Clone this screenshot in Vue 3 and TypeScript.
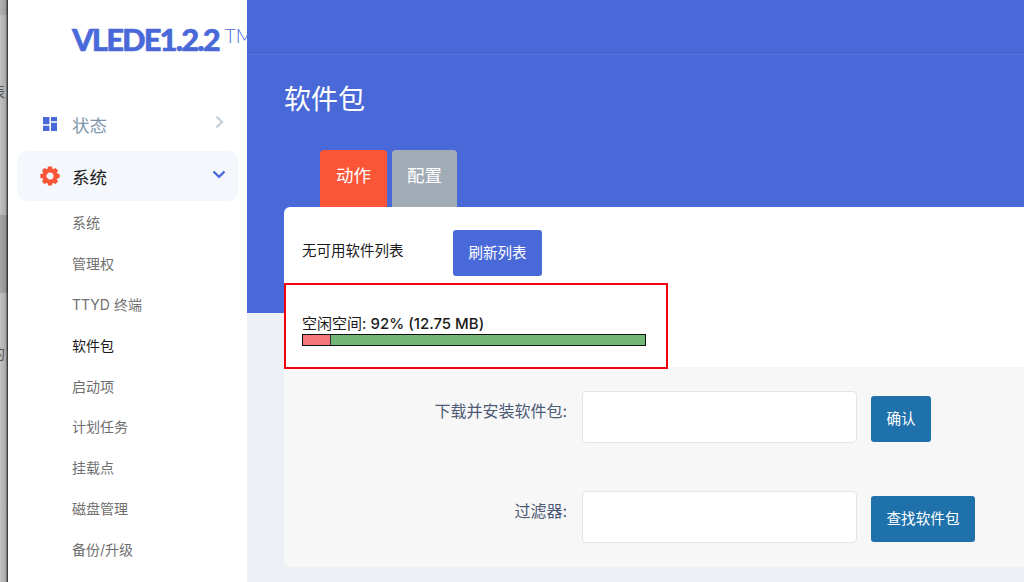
<template>
  <div class="page">
    <div class="backdrop">
      <span class="backdrop__char backdrop__char--top">表</span>
      <span class="backdrop__char backdrop__char--bottom">的</span>
    </div>

    <aside class="sidebar">
      <div class="logo">VLEDE1.2.2<span class="logo__tm">TM</span></div>

      <nav class="nav">
        <a class="nav__item">
          <span class="nav__slot">
            <svg viewBox="0 0 16 16" width="16" height="16">
              <path d="M1 1h6.4v7.2H1zM9 1h6v4.2H9zM1 9.8h6.4V15H1zM9 6.8h6V15H9z" fill="#4a69d9" />
            </svg>
          </span>
          <span class="nav__label">状态</span>
          <svg class="nav__arrow" viewBox="0 0 14 14" width="14" height="14">
            <path d="M4.5 1.5L10 7l-5.5 5.5" fill="none" stroke="#c5d0da" stroke-width="2.4" />
          </svg>
        </a>

        <a class="nav__item nav__item--open">
          <span class="nav__slot">
            <svg viewBox="0 0 20 20" width="20" height="20">
              <rect
                v-for="angle in gearTeeth"
                :key="angle"
                x="7.8"
                y="0.4"
                width="4.4"
                height="4.4"
                rx="0.8"
                fill="#fb5538"
                :transform="`rotate(${angle} 10 10)`"
              />
              <circle cx="10" cy="10" r="5.6" fill="none" stroke="#fb5538" stroke-width="4.2" />
            </svg>
          </span>
          <span class="nav__label">系统</span>
          <svg class="nav__arrow" viewBox="0 0 14 14" width="14" height="14">
            <path d="M1.5 4.5L7 9.8l5.5-5.3" fill="none" stroke="#4a69d9" stroke-width="2.4" />
          </svg>
        </a>

        <ul class="subnav">
          <li
            v-for="item in subItems"
            :key="item"
            class="subnav__item"
            :class="{ 'subnav__item--active': item === '软件包' }"
          >
            {{ item }}
          </li>
        </ul>
      </nav>
    </aside>

    <main class="main">
      <div class="hero">
        <div class="hero__top"></div>
        <h2 class="hero__title">软件包</h2>
        <div class="tabs">
          <span class="tab tab--active">动作</span>
          <span class="tab">配置</span>
        </div>
      </div>

      <section class="card">
        <div class="card__status">
          <span class="card__status-text">无可用软件列表</span>
          <button class="btn btn--primary">刷新列表</button>
        </div>

        <div class="space">
          <div class="space__text">空闲空间: <span class="space__value">92% (12.75 MB)</span></div>
          <div class="bar">
            <div class="bar__used"></div>
            <div class="bar__free"></div>
          </div>
        </div>

        <div class="form">
          <div v-for="row in formRows" :key="row.label" class="form__row">
            <label class="form__label">{{ row.label }}:</label>
            <input class="form__input" type="text" />
            <button class="btn btn--action">{{ row.action }}</button>
          </div>
        </div>

        <div class="highlight"></div>
      </section>
    </main>
  </div>
</template>

<script setup lang="ts">
const gearTeeth: number[] = [0, 45, 90, 135, 180, 225, 270, 315]

const subItems: string[] = [
  '系统',
  '管理权',
  'TTYD 终端',
  '软件包',
  '启动项',
  '计划任务',
  '挂载点',
  '磁盘管理',
  '备份/升级'
]

interface FormRow {
  label: string
  action: string
}

const formRows: FormRow[] = [
  { label: '下载并安装软件包', action: '确认' },
  { label: '过滤器', action: '查找软件包' }
]
</script>

<style>
html,
body {
  margin: 0;
  overflow: hidden;
}
</style>

<style scoped>
.page {
  display: flex;
  width: 1024px;
  height: 582px;
  overflow: hidden;
  font-family: Inter, "Noto Sans CJK SC", sans-serif;
  background: #eef0f8;
}

.backdrop {
  position: relative;
  flex: 0 0 8px;
  overflow: hidden;
  background:
    linear-gradient(180deg, rgba(0, 0, 0, 0.08) 0, rgba(0, 0, 0, 0.08) 15px, transparent 15px, transparent 215px, rgba(0, 0, 0, 0.14) 215px, rgba(0, 0, 0, 0.14) 293px, transparent 293px),
    linear-gradient(90deg, #c2c2c2 0, #a8a8a8 6px, #4a4a4a 7px, #333 8px);
}

.backdrop__char {
  position: absolute;
  left: -9px;
  font-size: 14px;
  color: #555;
}

.backdrop__char--top {
  top: 81px;
}

.backdrop__char--bottom {
  top: 343px;
}

.sidebar {
  flex: 0 0 239px;
  min-width: 0;
  overflow: hidden;
  box-sizing: border-box;
  background: #fff;
  white-space: nowrap;
}

.logo {
  height: 40px;
  padding: 20px 0 0 64px;
  font-family: Lato, "Liberation Sans", sans-serif;
  font-size: 31px;
  line-height: 38px;
  font-weight: 900;
  letter-spacing: -1.9px;
  color: #4a69d9;
  -webkit-text-stroke: 0.5px #4a69d9;
}

.logo__tm {
  margin-left: 6px;
  font-size: 19px;
  line-height: 0;
  font-weight: 300;
  letter-spacing: 0;
  -webkit-text-stroke: 0;
  vertical-align: 8px;
}

.nav {
  padding: 39px 9px 0;
}

.nav__item {
  display: flex;
  align-items: center;
  height: 50px;
  padding: 0 12px 0 23px;
  border-radius: 10px;
  color: #7f97ac;
  font-size: 17.5px;
}

.nav__item--open {
  margin-top: 2px;
  background: #f4f7fb;
  color: #1a1a1a;
}

.nav__slot {
  display: flex;
  flex: none;
  justify-content: center;
  width: 20px;
  margin-right: 12px;
}

.nav__label {
  flex: 1;
}

.nav__arrow {
  flex: none;
  margin-bottom: 4px;
}

.subnav {
  list-style: none;
  margin: 0;
  padding: 1px 0 0 55px;
}

.subnav__item {
  height: 40.9px;
  line-height: 42px;
  font-size: 14px;
  color: #6f6f6f;
}

.subnav__item--active {
  color: #1a1a1a;
}

.main {
  position: relative;
  flex: 1;
  min-width: 0;
}

.hero {
  height: 313px;
  background: #4a69d9;
}

.hero__top {
  height: 55px;
  border-bottom: 1px solid #5a76dd;
  box-sizing: border-box;
}

.hero__title {
  margin: 0;
  padding: 27px 0 0 37px;
  font-size: 27px;
  line-height: 36px;
  font-weight: 400;
  color: #fff;
}

.tabs {
  display: flex;
  gap: 5px;
  padding: 32px 0 0 73px;
}

.tab {
  width: 65px;
  height: 57px;
  box-sizing: border-box;
  padding-top: 13px;
  border-radius: 4px 4px 0 0;
  background: #a2acb6;
  color: #fff;
  font-size: 17.5px;
  line-height: 26px;
  text-align: center;
}

.tab--active {
  width: 67px;
  background: #fb5538;
}

.card {
  position: absolute;
  left: 37px;
  top: 207px;
  width: 800px;
  height: 360px;
  overflow: hidden;
  border-radius: 6px;
  background: #fff;
}

.card__status {
  display: flex;
  align-items: flex-start;
  height: 77px;
  padding: 23px 0 0 18px;
  box-sizing: border-box;
}

.card__status-text {
  width: 151px;
  font-size: 14.5px;
  line-height: 42px;
  color: #1a1a1a;
}

.btn {
  border: 0;
  border-radius: 3px;
  color: #fff;
  font-family: inherit;
  cursor: pointer;
}

.btn--primary {
  width: 89px;
  height: 46px;
  padding: 0 0 3px;
  background: #4a69d9;
  font-size: 14.5px;
}

.space {
  height: 83px;
  padding: 31px 0 0 18px;
  box-sizing: border-box;
}

.space__text {
  height: 18px;
  font-size: 15px;
  line-height: 18px;
  color: #1a1a1a;
}

.space__value {
  font-weight: 500;
}

.bar {
  display: flex;
  width: 344px;
  height: 12px;
  margin-top: 1px;
  box-sizing: border-box;
  border: 1px solid #111;
}

.bar__used {
  width: 27px;
  border-right: 1px solid #333;
  background: #f4777b;
}

.bar__free {
  flex: 1;
  background: #72b678;
}

.form {
  height: 200px;
  background: #f7f7f8;
}

.form__row {
  display: flex;
  align-items: flex-start;
  height: 100px;
  padding-top: 24px;
  box-sizing: border-box;
}

.form__label {
  width: 283px;
  padding-top: 10px;
  font-size: 16px;
  line-height: 20px;
  color: #4d5a75;
  text-align: right;
}

.form__input {
  width: 275px;
  height: 52px;
  margin-left: 15px;
  box-sizing: border-box;
  border: 1px solid #e0e5ea;
  border-radius: 4px;
  background: #fff;
}

.btn--action {
  height: 46px;
  margin: 5px 0 0 14px;
  padding: 0 15.5px 3px;
  background: #1f71ab;
  font-size: 14.6px;
}

.highlight {
  position: absolute;
  left: 0;
  top: 76px;
  width: 384px;
  height: 86px;
  box-sizing: border-box;
  border: 2px solid #f1000f;
  pointer-events: none;
}
</style>
